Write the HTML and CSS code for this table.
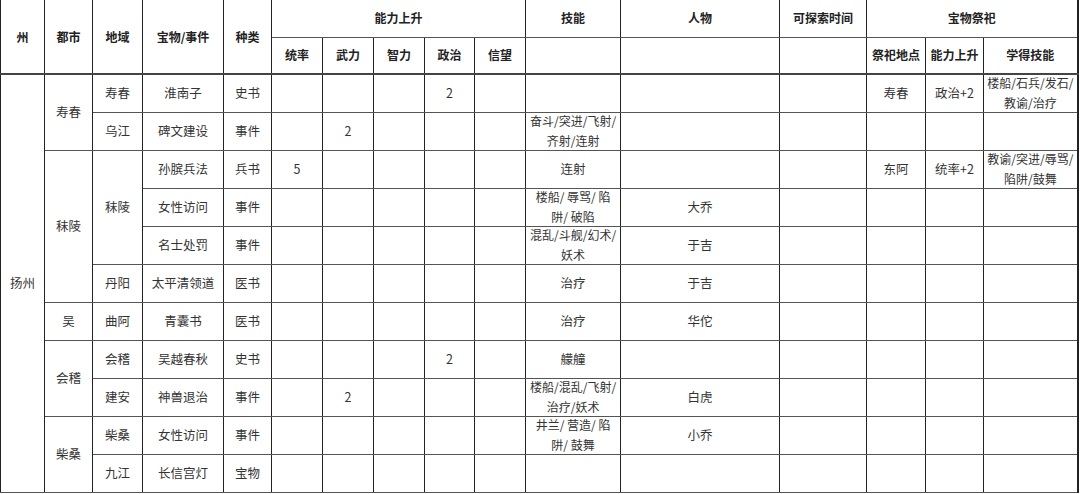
FILE: index.html
```html
<!DOCTYPE html>
<html lang="zh-CN">
<head>
<meta charset="utf-8">
<title>扬州 宝物表</title>
<link rel="stylesheet" href="styles.css">
</head>
<body>
<table class="grid">
  <colgroup>
    <col class="c44"><col class="c48"><col class="c50"><col class="c81"><col class="c48">
    <col class="c51"><col class="c51"><col class="c51"><col class="c50"><col class="c51">
    <col class="c95"><col class="c159"><col class="c87"><col class="c59"><col class="c58"><col class="c94">
  </colgroup>
  <thead>
    <tr class="h1">
      <th rowspan="2">州</th>
      <th rowspan="2">都市</th>
      <th rowspan="2">地域</th>
      <th rowspan="2">宝物/事件</th>
      <th rowspan="2">种类</th>
      <th colspan="5">能力上升</th>
      <th>技能</th>
      <th>人物</th>
      <th>可探索时间</th>
      <th colspan="3">宝物祭祀</th>
    </tr>
    <tr class="h2">
      <th>统率</th><th>武力</th><th>智力</th><th>政治</th><th>信望</th>
      <th></th><th></th><th></th>
      <th>祭祀地点</th><th>能力上升</th><th>学得技能</th>
    </tr>
  </thead>
  <tbody>
    <tr>
      <td rowspan="11">扬州</td>
      <td rowspan="2">寿春</td>
      <td>寿春</td><td>淮南子</td><td>史书</td>
      <td></td><td></td><td></td><td>2</td><td></td>
      <td></td><td></td><td></td>
      <td>寿春</td><td>政治+2</td><td><div class="two">楼船/石兵/发石/<br>教谕/治疗</div></td>
    </tr>
    <tr>
      <td>乌江</td><td>碑文建设</td><td>事件</td>
      <td></td><td>2</td><td></td><td></td><td></td>
      <td><div class="two">奋斗/突进/飞射/<br>齐射/连射</div></td><td></td><td></td>
      <td></td><td></td><td></td>
    </tr>
    <tr>
      <td rowspan="4">秣陵</td>
      <td rowspan="3">秣陵</td>
      <td>孙膑兵法</td><td>兵书</td>
      <td>5</td><td></td><td></td><td></td><td></td>
      <td>连射</td><td></td><td></td>
      <td>东阿</td><td>统率+2</td><td><div class="two">教谕/突进/辱骂/<br>陷阱/鼓舞</div></td>
    </tr>
    <tr>
      <td>女性访问</td><td>事件</td>
      <td></td><td></td><td></td><td></td><td></td>
      <td><div class="two">楼船/ 辱骂/ 陷<br>阱/ 破陷</div></td><td>大乔</td><td></td>
      <td></td><td></td><td></td>
    </tr>
    <tr>
      <td>名士处罚</td><td>事件</td>
      <td></td><td></td><td></td><td></td><td></td>
      <td><div class="two">混乱/斗舰/幻术/<br>妖术</div></td><td>于吉</td><td></td>
      <td></td><td></td><td></td>
    </tr>
    <tr>
      <td>丹阳</td><td>太平清领道</td><td>医书</td>
      <td></td><td></td><td></td><td></td><td></td>
      <td>治疗</td><td>于吉</td><td></td>
      <td></td><td></td><td></td>
    </tr>
    <tr>
      <td>吴</td>
      <td>曲阿</td><td>青囊书</td><td>医书</td>
      <td></td><td></td><td></td><td></td><td></td>
      <td>治疗</td><td>华佗</td><td></td>
      <td></td><td></td><td></td>
    </tr>
    <tr>
      <td rowspan="2">会稽</td>
      <td>会稽</td><td>吴越春秋</td><td>史书</td>
      <td></td><td></td><td></td><td>2</td><td></td>
      <td>艨艟</td><td></td><td></td>
      <td></td><td></td><td></td>
    </tr>
    <tr>
      <td>建安</td><td>神兽退治</td><td>事件</td>
      <td></td><td>2</td><td></td><td></td><td></td>
      <td><div class="two">楼船/混乱/飞射/<br>治疗/妖术</div></td><td>白虎</td><td></td>
      <td></td><td></td><td></td>
    </tr>
    <tr>
      <td rowspan="2">柴桑</td>
      <td>柴桑</td><td>女性访问</td><td>事件</td>
      <td></td><td></td><td></td><td></td><td></td>
      <td><div class="two">井兰/ 营造/ 陷<br>阱/ 鼓舞</div></td><td>小乔</td><td></td>
      <td></td><td></td><td></td>
    </tr>
    <tr>
      <td>九江</td><td>长信宫灯</td><td>宝物</td>
      <td></td><td></td><td></td><td></td><td></td>
      <td></td><td></td><td></td>
      <td></td><td></td><td></td>
    </tr>
  </tbody>
</table>
</body>
</html>
```

FILE: styles.css
```css
html, body {
  margin: 0;
  padding: 0;
  background: #ffffff;
}

body {
  font-family: "Noto Sans CJK SC", "Noto Sans", sans-serif;
  font-size: 12.5px;
  color: #333333;
}

.grid {
  border-collapse: collapse;
  table-layout: fixed;
  width: 1078px;
  border-left: 1px solid #444444;
  border-right: 2px solid #222222;
  border-bottom: 1px solid #222222;
}

.c44 { width: 44px; }
.c48 { width: 48px; }
.c50 { width: 50px; }
.c51 { width: 51px; }
.c58 { width: 58px; }
.c59 { width: 59px; }
.c81 { width: 81px; }
.c87 { width: 87px; }
.c94 { width: 94px; }
.c95 { width: 95px; }
.c159 { width: 159px; }

.grid th,
.grid td {
  padding: 0;
  text-align: center;
  vertical-align: middle;
  border-left: 1px solid #222222;
  border-right: 1px solid #222222;
  border-top: 1px solid #555555;
  border-bottom: 1px solid #555555;
  line-height: 16px;
  white-space: nowrap;
}

.grid thead tr:first-child th {
  border-top: none;
}

.grid th {
  font-size: 12px;
  font-weight: bold;
  color: #222222;
}

.h1, .h2 {
  height: 37px;
}

.grid thead .h2 th,
.grid thead th[rowspan] {
  border-bottom: 2px solid #444444;
}

.grid tbody tr {
  height: 38px;
}

.two {
  height: 34px;
  display: flex;
  flex-direction: column;
  justify-content: center;
  font-size: 12px;
  line-height: 20px;
}
```
